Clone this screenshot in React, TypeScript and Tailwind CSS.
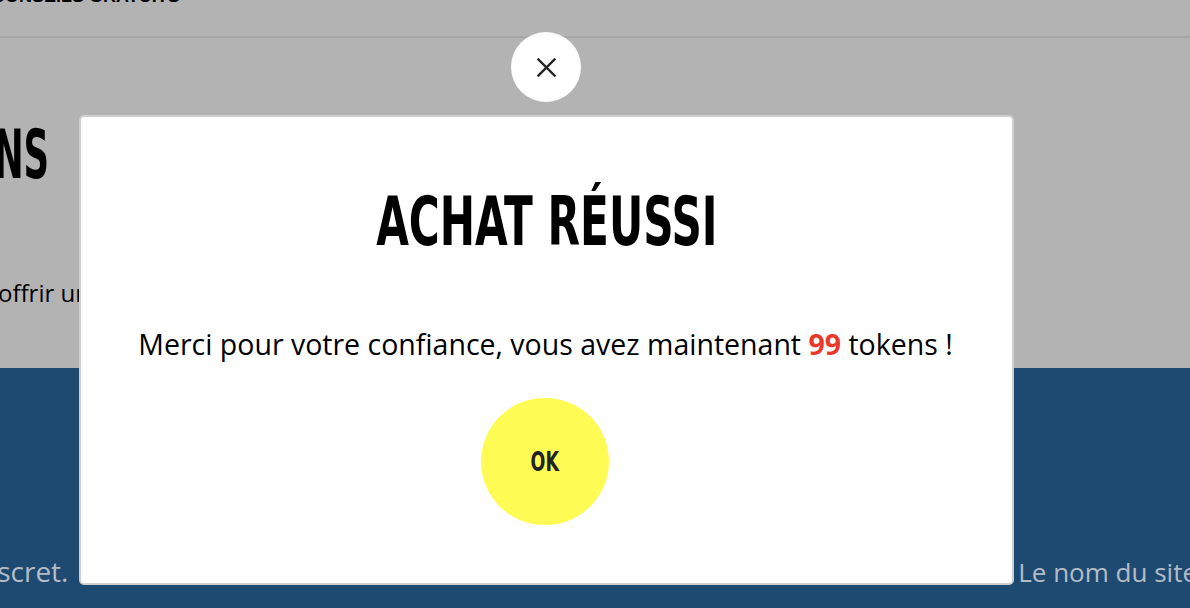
import React from "react";

export default function App() {
  const cond = { fontFamily: '"DejaVu Sans Condensed", "DejaVu Sans", sans-serif' };
  return (
    <div className="relative w-[1190px] h-[608px] overflow-hidden bg-[#b3b3b3]" style={{ fontFamily: '"Open Sans", "Lato", sans-serif' }}>
      {/* background page */}
      <header className="h-[38px] border-b-2 border-[#a6a6a6] overflow-hidden">
        <div className="-mt-[13px] -ml-[8px] text-[18px] font-bold leading-[18px] text-black whitespace-nowrap" style={{ fontFamily: '"Liberation Sans", sans-serif' }}>
          CONSEILS GRATUITS
        </div>
      </header>
      <section className="h-[330px] overflow-hidden flex flex-col items-start pt-[83px]">
        <h2 className="-ml-[143px] origin-right scale-x-[0.58] text-[68px] font-bold leading-none text-black whitespace-nowrap" style={cond}>
          CONS
        </h2>
        <p className="mt-[92px] -ml-[2px] text-[24px] leading-none text-black whitespace-nowrap">
          offrir un
        </p>
      </section>
      <footer className="h-[240px] bg-[#1e4a72] overflow-hidden text-[#b4bcc6] flex justify-between items-start pt-[189px]">
        <span className="-ml-[27px] text-[28px] leading-none whitespace-nowrap">discret.</span>
        <span className="-mr-[7px] mt-[2px] text-[26px] leading-none whitespace-nowrap">Le nom du site</span>
      </footer>

      {/* modal */}
      <button className="absolute left-[511px] top-[32px] w-[70px] h-[70px] rounded-full bg-white flex items-center justify-center">
        <svg width="19" height="19" viewBox="0 0 19 19" fill="none" stroke="#222" strokeWidth="2.4" strokeLinecap="square">
          <path d="M1.5 1.5 L17.5 17.5 M17.5 1.5 L1.5 17.5" />
        </svg>
      </button>
      <div className="absolute left-[79px] top-[115px] w-[935px] h-[470px] bg-white rounded-[5px] border-2 border-[#cfcfcf] flex flex-col items-center">
        <div className="mt-[70px] h-[70px] flex items-center justify-center">
          <h1 className="origin-center scale-x-[0.7] text-[67px] font-bold leading-none text-black whitespace-nowrap" style={cond}>
            ACHAT RÉUSSI
          </h1>
        </div>
        <p className="mt-[73px] -ml-[2px] text-[28.5px] leading-none text-black whitespace-nowrap">
          Merci pour votre confiance, vous avez maintenant <span className="font-bold text-[#e8392a]">99</span> tokens !
        </p>
        <button className="mt-[39px] -ml-[3px] w-[128px] h-[127px] rounded-full bg-[#fffb55] flex items-center justify-center">
          <span className="scale-x-[0.72] text-[27px] font-bold leading-none text-[#222]" style={cond}>OK</span>
        </button>
      </div>
    </div>
  );
}
